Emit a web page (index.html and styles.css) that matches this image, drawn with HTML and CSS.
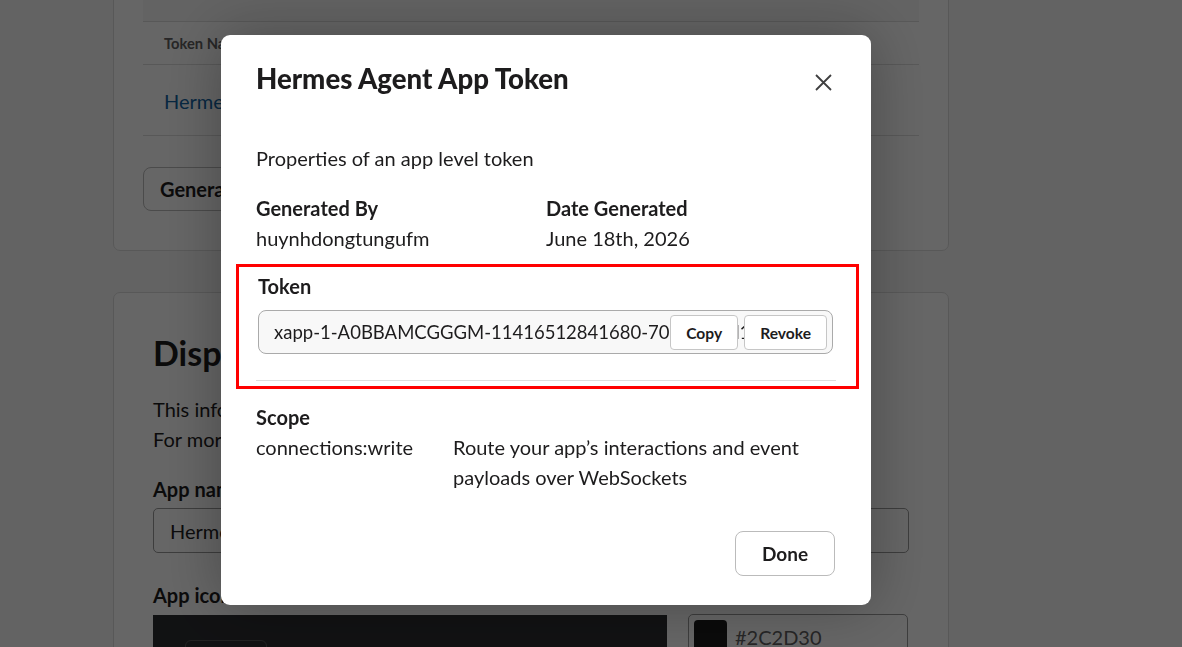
FILE: index.html
```html
<!DOCTYPE html>
<html lang="en">
<head>
    <meta charset="UTF-8">
    <meta name="viewport" content="width=device-width, initial-scale=1.0">
    <title>Basic Information</title>
    <link rel="stylesheet" href="styles.css">
</head>
<body>
    <div class="main">
        <section class="card tokens">
            <div class="table-top"></div>
            <div class="table-head">Token Name</div>
            <div class="table-row"><a href="#">Hermes Agent App Token</a></div>
            <button class="btn">Generate Token and Scopes</button>
        </section>

        <section class="card display">
            <h2>Display Information</h2>
            <p>This information will be shown in the Slack interface.</p>
            <p>For more details, read our app listing guidelines.</p>
            <label class="field-label">App name</label>
            <div class="text-input">Hermes Agent</div>
            <label class="field-label icon-label">App icon &amp; Preview</label>
            <div class="icon-row">
                <div class="icon-preview"><span class="preview-btn"></span></div>
                <div class="color-input"><span class="swatch"></span>#2C2D30</div>
            </div>
        </section>
    </div>

    <div class="overlay">
        <div class="modal">
            <div class="modal-header">
                <h1>Hermes Agent App Token</h1>
                <button class="close" aria-label="Close">
                    <svg width="17" height="17" viewBox="0 0 17 17">
                        <path d="M1 1 L16 16 M16 1 L1 16" stroke="#3f3f40" stroke-width="1.8" fill="none"/>
                    </svg>
                </button>
            </div>

            <div class="modal-body">
                <p class="intro">Properties of an app level token</p>

                <div class="meta">
                    <div>
                        <div class="label">Generated By</div>
                        <div>huynhdongtungufm</div>
                    </div>
                    <div>
                        <div class="label">Date Generated</div>
                        <div>June 18th, 2026</div>
                    </div>
                </div>

                <div class="highlight">
                    <div class="label token-label">Token</div>
                    <div class="token-box">
                        <span class="token-text">xapp-1-A0BBAMCGGGM-11416512841680-70c3e8c5d1f2a9b7c64e0d8f3a1b5c9e2d7f4a6b8c0e1d3</span>
                        <div class="token-actions">
                            <button class="small-btn">Copy</button>
                            <button class="small-btn">Revoke</button>
                        </div>
                    </div>
                    <hr class="divider">
                </div>

                <div class="label scope-label">Scope</div>
                <div class="scope-row">
                    <div class="scope-name">connections:write</div>
                    <div class="scope-desc">Route your app’s interactions and event payloads over WebSockets</div>
                </div>
            </div>

            <div class="modal-footer">
                <button class="done">Done</button>
            </div>
        </div>
    </div>
</body>
</html>
```

FILE: styles.css
```css
body {
    margin: 0;
    background-color: #f8f8f8;
    font-family: Lato, "Open Sans", Arial, sans-serif;
    font-size: 20px;
    line-height: 30px;
    color: #1d1c1d;
    overflow: hidden;
    height: 647px;
}
button {
    font-family: inherit;
    cursor: pointer;
}

/* page behind the dialog */
.main {
    width: 836px;
    margin-left: 113px;
}
.card {
    background-color: #fff;
    border: 1px solid #ddd;
    border-radius: 7px;
    box-sizing: border-box;
}
.tokens {
    margin-top: -40px;
    padding: 0 29px 39px;
}
.table-top {
    height: 60px;
    background-color: #f8f8f8;
    border-bottom: 1px solid #ddd;
}
.table-head {
    height: 42px;
    line-height: 42px;
    padding-left: 21px;
    font-size: 14.7px;
    font-weight: 700;
    color: #616061;
    border-bottom: 1px solid #ddd;
}
.table-row {
    height: 70px;
    line-height: 72px;
    padding-left: 21px;
    border-bottom: 1px solid #ddd;
}
.table-row a {
    color: #1264a3;
    text-decoration: none;
}
.btn {
    margin-top: 31px;
    height: 44px;
    padding: 0 16px;
    background: #fff;
    border: 1px solid #bbb;
    border-radius: 8px;
    font-size: 20px;
    font-weight: 700;
    color: #1d1c1d;
}
.display {
    margin-top: 41px;
    padding: 40px 39px;
    height: 400px;
}
.display h2 {
    margin: 0;
    font-size: 34px;
    line-height: 40px;
    font-weight: 700;
}
.display p {
    margin: 21px 0 0;
    white-space: nowrap;
}
.display p + p {
    margin-top: 0;
}
.field-label {
    display: block;
    margin-top: 20px;
    font-weight: 700;
}
.text-input {
    margin-top: 4px;
    height: 45px;
    line-height: 45px;
    padding: 0 16px;
    border: 1px solid #999;
    border-radius: 5px;
    box-sizing: border-box;
}
.icon-label {
    margin-top: 27px;
}
.icon-row {
    display: flex;
    gap: 21px;
    margin-top: 5px;
}
.icon-preview {
    width: 514px;
    height: 120px;
    background-color: #2c2d30;
    padding: 25px 0 0 32px;
    box-sizing: border-box;
}
.preview-btn {
    display: block;
    width: 80px;
    height: 40px;
    border: 1px solid #555;
    border-radius: 6px;
}
.color-input {
    display: flex;
    align-items: center;
    gap: 8px;
    width: 220px;
    height: 45px;
    margin-top: -1px;
    padding: 0 5px;
    border: 1px solid #999;
    border-radius: 5px;
    box-sizing: border-box;
    color: #616061;
}
.swatch {
    width: 33px;
    height: 33px;
    background-color: #1a1a1a;
    border-radius: 4px;
}

/* dialog */
.overlay {
    position: fixed;
    inset: 0;
    background-color: rgba(0, 0, 0, 0.6);
    padding: 35px 0 0 221px;
}
.modal {
    width: 650px;
    height: 570px;
    background-color: #fff;
    border-radius: 9px;
    box-shadow: 0 0 60px rgba(0, 0, 0, 0.3);
    box-sizing: border-box;
    display: flex;
    flex-direction: column;
}
.modal-header {
    display: flex;
    align-items: center;
    justify-content: space-between;
    padding: 26px 35px 0;
}
.modal-header h1 {
    margin: 0;
    font-size: 27.6px;
    line-height: 36px;
    font-weight: 900;
}
.close {
    background: none;
    border: none;
    padding: 0;
    width: 17px;
    height: 17px;
    margin-right: 4px;
    margin-top: 6px;
}
.close svg {
    display: block;
}
.modal-body {
    padding: 0 35px;
}
.intro {
    margin: 46px 0 0;
}
.label {
    font-weight: 700;
}
.meta {
    display: grid;
    grid-template-columns: 1fr 1fr;
    margin-top: 20px;
}
.highlight {
    margin: 11px -23px 0 -20px;
    padding: 4px 20px 5px 17px;
    border: 3px solid #f00;
}
.token-label {
    margin-left: 2px;
}
.token-box {
    position: relative;
    height: 44px;
    margin: 9px 3px 0 2px;
    background-color: #f8f8f8;
    border: 1px solid #aaa;
    border-radius: 8px;
    box-sizing: border-box;
    white-space: nowrap;
}
.token-text {
    display: block;
    overflow: hidden;
    margin-right: 5px;
    padding-left: 15px;
    font-size: 18.5px;
    line-height: 42px;
}
.token-actions {
    position: absolute;
    top: 4px;
    right: 5px;
    display: flex;
    gap: 6px;
}
.small-btn {
    height: 35px;
    padding: 0 15px;
    background-color: #fff;
    border: 1px solid #c6c6c6;
    border-radius: 4px;
    font-size: 15.6px;
    font-weight: 700;
    color: #1d1c1d;
}
.divider {
    margin: 26px 0 0;
    border: none;
    border-top: 1px solid #ddd;
}
.scope-label {
    margin-top: 13px;
}
.scope-row {
    display: flex;
}
.scope-name {
    width: 197px;
    flex-shrink: 0;
}
.modal-footer {
    display: flex;
    justify-content: flex-end;
    padding: 39px 36px 0;
}
.done {
    width: 100px;
    height: 45px;
    background-color: #fff;
    border: 1px solid #bbb;
    border-radius: 8px;
    font-size: 19px;
    font-weight: 700;
    color: #1d1c1d;
}
```
